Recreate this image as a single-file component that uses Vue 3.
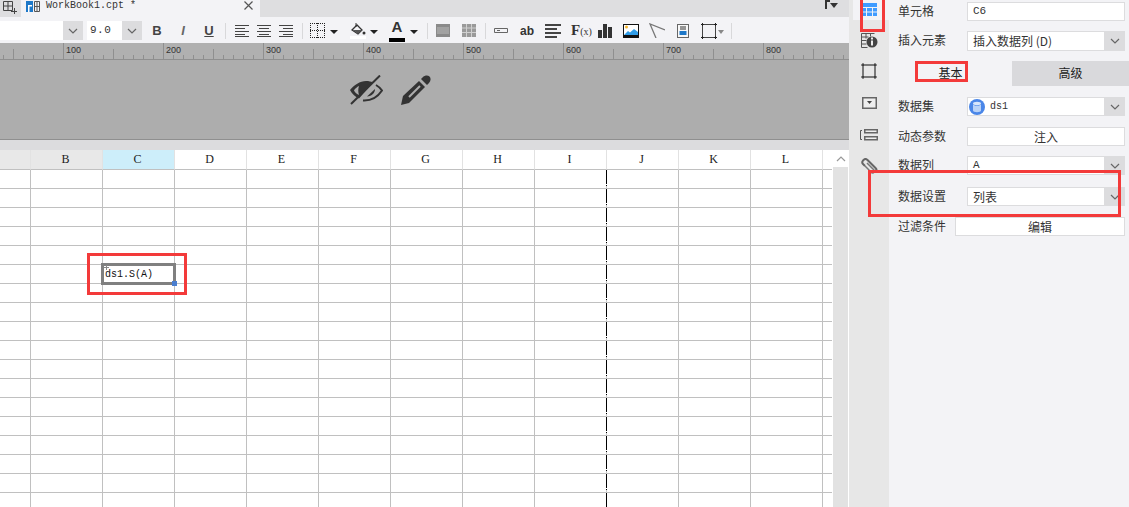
<template>
  <div class="app">
    <div class="main">
      <!-- 标签栏 -->
      <div class="tabbar">
        <svg class="tab-add" width="14" height="14" viewBox="0 0 14 14"><path d="M0.5 1.500h9v9h-9zM5 1.500v9M0.500 6h9" fill="none" stroke="#444" /><path d="M11.500 8v6M8 11.500h6" stroke="#444" /></svg>
        <div class="tab">
          <svg class="tab-icon" width="14" height="13" viewBox="0 0 14 13"><rect x="0" y="1" width="7" height="11" fill="#1e78c8" /><path d="M2 5h4v1.500H3.500V12H2z" fill="#fff" /><path d="M8.500 1.500h5v10h-5zM8.500 6.500h5M11 1.500v10" fill="none" stroke="#555" /></svg>
          <span class="tab-name">WorkBook1.cpt *</span>
          <svg class="tab-close" width="9" height="9" viewBox="0 0 9 9"><path d="M0.500 0.500l8 8M8.500 0.500l-8 8" stroke="#555" stroke-width="1.200" /></svg>
        </div>
        <svg class="painter" width="14" height="9" viewBox="0 0 14 9"><path d="M0 0h5v2H2v7H0z" fill="#333" /><path d="M5 3h8l-4 5z" fill="#333" /></svg>
      </div>

      <!-- 工具栏 -->
      <div class="toolbar">
        <div class="combo combo-font">
          <div class="combo-value"></div>
          <div class="combo-btn"><svg width="10" height="6" viewBox="0 0 10 6"><path d="M1 1l4 4 4-4" fill="none" stroke="#666" stroke-width="1.200" /></svg></div>
        </div>
        <div class="combo combo-size">
          <div class="combo-value">9.0</div>
          <div class="combo-btn"><svg width="10" height="6" viewBox="0 0 10 6"><path d="M1 1l4 4 4-4" fill="none" stroke="#666" stroke-width="1.200" /></svg></div>
        </div>
        <span class="tool t-text bold">B</span>
        <span class="tool t-text italic">I</span>
        <span class="tool t-text under">U</span>
        <i class="sep s1"></i>
        <svg class="tool-a a1" width="14" height="12" viewBox="0 0 14 12"><path d="M0 .5h14M0 3.500h10M0 6.500h14M0 9.500h10M0 11.500h14" stroke="#444" /></svg>
        <svg class="tool-a" width="14" height="12" viewBox="0 0 14 12"><path d="M0 .5h14M2 3.500h10M0 6.500h14M2 9.500h10M0 11.500h14" stroke="#444" /></svg>
        <svg class="tool-a" width="14" height="12" viewBox="0 0 14 12"><path d="M0 .5h14M4 3.500h10M0 6.500h14M4 9.500h10M0 11.500h14" stroke="#444" /></svg>
        <i class="sep s2"></i>
        <svg class="ic" style="margin-left:7px" width="15" height="15" viewBox="0 0 15 15"><path d="M0 .5h15M0 14.500h15M.5 0v15M14.500 0v15M7.500 0v15M0 7.500h15" fill="none" stroke="#222" stroke-dasharray="1 1" /></svg>
        <i class="caret" style="margin-left:5px"></i>
        <svg class="ic" style="margin-left:12px" width="16" height="16" viewBox="0 0 16 16"><path d="M2 7l5-5 5 5-4 4z" fill="none" stroke="#333" stroke-width="1.300" /><path d="M3 7h9l-4 4z" fill="#555" /><path d="M6 4V0" stroke="#333" /><circle cx="14" cy="10" r="1.500" fill="#333" /><rect y="13" width="16" height="3" fill="#fff" /></svg>
        <i class="caret" style="margin-left:4px"></i>
        <div class="color-a" style="margin-left:11px">A</div>
        <i class="caret" style="margin-left:5px"></i>
        <i class="sep" style="margin-left:9px"></i>
        <svg class="ic" style="margin-left:8px" width="14" height="13" viewBox="0 0 14 13"><rect width="14" height="13" fill="#8a8a8a" /><rect x="1" y="3" width="12" height="7" fill="#a2a2a2" /></svg>
        <svg class="ic" style="margin-left:12px" width="14" height="13" viewBox="0 0 14 13"><rect width="14" height="13" fill="#9a9a9a" /><path d="M0 4h14M0 8.500h14M4.500 0v13M9.500 0v13" stroke="#d0d0d0" /></svg>
        <i class="sep" style="margin-left:9px"></i>
        <svg class="ic" style="margin-left:8px" width="14" height="5" viewBox="0 0 14 5"><path d="M.5.500h13v4H.5z" fill="none" stroke="#666" /><path d="M3 2.500h3" stroke="#666" /></svg>
        <span class="ab">ab</span>
        <svg class="ic" style="margin-left:11px" width="16" height="14" viewBox="0 0 16 14"><path d="M0 1h16M0 5h12M0 9h16M0 13h12" stroke="#444" stroke-width="2" /></svg>
        <span class="fx">F<small>(x)</small></span>
        <svg class="ic" style="margin-left:11px" width="14" height="14" viewBox="0 0 14 14"><path d="M0 6h4v8H0zM5 0h4v14H5zM10 3h4v11h-4z" fill="#333" /></svg>
        <svg class="ic" style="margin-left:11px" width="16" height="14" viewBox="0 0 16 14"><rect width="16" height="14" fill="#111" /><rect x="1" y="1" width="14" height="10" fill="#fff" /><circle cx="3.500" cy="3" r="1.500" fill="#f5b52e" /><path d="M1 11l4-4 2 1.500L11 5l4 3v3z" fill="#2f9ce8" /></svg>
        <svg class="ic" style="margin-left:10px" width="16" height="15" viewBox="0 0 16 15"><path d="M16 7L1 1l6 14" fill="none" stroke="#777" stroke-width="1.300" /></svg>
        <svg class="ic" style="margin-left:12px" width="12" height="14" viewBox="0 0 12 14"><rect x=".5" y=".5" width="11" height="13" fill="#f8f8f8" stroke="#666" /><path d="M3 3h6M3 5h6" stroke="#333" /><rect x="2.500" y="7" width="7" height="4" fill="#1e78c8" /></svg>
        <svg class="ic" style="margin-left:12px" width="16" height="16" viewBox="0 0 16 16"><path d="M1.500 1.500h13v13h-13z" fill="none" stroke="#444" /><path d="M0 1.500h3M1.500 0v3M13 1.500h3M14.500 0v3M0 14.500h3M1.500 13v3M13 14.500h3M14.500 13v3" stroke="#222" /></svg>
        <i class="caret gray" style="margin-left:1px"></i>
        <i class="sep" style="margin-left:7px"></i>
      </div>

      <!-- 标尺 -->
      <svg class="ruler" width="849" height="17" viewBox="0 0 849 17">
        <rect width="849" height="17" fill="#b0b0b0" />
        <path :d="rulerTicks" stroke="#8f8f8f" fill="none" />
        <rect y="16" width="849" height="1.500" fill="#8f8f8f" />
        <text v-for="n in rulerLabels" :key="n" :x="n - 37 + 3" y="10" class="ruler-label">{{ n }}</text>
      </svg>

      <!-- 灰色预览区 -->
      <div class="preview">
        <svg width="33" height="30" viewBox="0 0 33 30">
          <path d="M0 15C4 10 10 6 16 6c3 0 5 .5 7 1.500L9 23.500C5 21.500 2 19 0 15zm4 .5c1 2 3 3.500 5 4.500-1-3-1-6 0-9-2 1-4 2.500-5 4.500z" fill="#333" fill-rule="evenodd" />
          <path d="M26 10c2.500 1.500 4.500 3 6 5.500-4 6-10 10.500-19 10" fill="none" stroke="#333" stroke-width="2" />
          <path d="M25 14c0 4-3 7-8 7.500z" fill="#333" />
          <path d="M30 0.500L1 29" stroke="#333" stroke-width="2" />
        </svg>
        <svg class="pencil" width="30" height="30" viewBox="0 0 30 30">
          <path d="M22 2c2-2 5-2 6.500-.5S30 6 28 8l-2 2-6-6z" fill="#333" />
          <path d="M18 6l6 6L8 28l-8 2 2-9z" fill="#333" />
          <path d="M19 11L8 22" stroke="#adadad" stroke-width="2" />
        </svg>
      </div>
      <div class="strip"></div>

      <!-- 表格 -->
      <div class="sheet">
        <div class="sheet-body">
          <div class="col-header">
            <div class="head-cell narrow"></div>
            <div v-for="c in columns" :key="c" class="head-cell" :class="{ picked: c === 'C', dim: c === 'B' }">{{ c }}</div>
            <div class="head-cell tail"></div>
          </div>
          <div v-for="r in 18" :key="r" class="row">
            <div class="cell narrow"></div>
            <div v-for="c in columns" :key="c" class="cell"></div>
            <div class="cell tail"></div>
          </div>
          <div class="page-break"></div>
          <div class="selected">
            <span class="sel-text">ds1.S(A)</span>
            <svg class="plus" width="5" height="5" viewBox="0 0 5 5"><path d="M2.500 0v5M0 2.500h5" stroke="#888" /></svg>
            <i class="handle"></i>
          </div>
          <div class="mark mark-cell"></div>
        </div>
        <div class="scrollbar">
          <div class="scroll-up"><svg width="10" height="6" viewBox="0 0 10 6"><path d="M1 5l4-4 4 4" fill="none" stroke="#999" stroke-width="1.200" /></svg></div>
          <div class="scroll-track"></div>
        </div>
      </div>
    </div>

    <!-- 右侧图标栏 -->
    <div class="sidebar">
      <div class="side-item active">
        <svg width="15" height="13" viewBox="0 0 15 13"><path d="M0 0h15v4H0zM0 5h4v3.500H0zM5 5h5v3.500H5zM11 5h4v3.500h-4zM0 9.500h4V13H0zM5 9.500h5V13H5zM11 9.500h4V13h-4z" fill="#3f9bff" /></svg>
      </div>
      <div class="side-item i2">
        <svg width="17" height="15" viewBox="0 0 17 15"><path d="M.5.500h13M.5 4h7M.5 7.500h5M.5 11h5M.5.500v14h6M5 .5v5M9.500.5v3" fill="none" stroke="#555" /><circle cx="11" cy="9" r="5.500" fill="#444" /><rect x="10" y="7.500" width="2" height="5" fill="#eee" /><rect x="10" y="4.500" width="2" height="2" fill="#eee" /></svg>
      </div>
      <div class="side-item i3">
        <svg width="16" height="16" viewBox="0 0 16 16"><path d="M2 2h12v12H2z" fill="none" stroke="#555" stroke-width="1.500" /><path d="M0 2h3M2 0v3M13 2h3M14 0v3M0 14h3M2 13v3M13 14h3M14 13v3" stroke="#333" /></svg>
      </div>
      <div class="side-item i4">
        <svg width="15" height="12" viewBox="0 0 15 12"><rect x=".75" y=".75" width="13.500" height="10.500" fill="#eee" stroke="#666" stroke-width="1.500" /><path d="M5 4h5L7.500 7z" fill="#444" /></svg>
      </div>
      <div class="side-item i5">
        <svg width="18" height="12" viewBox="0 0 18 12"><path d="M2 1.500H0.500v9H2" fill="none" stroke="#555" /><rect x="4" y="0" width="14" height="4.500" fill="#666" /><rect x="5.500" y="1.500" width="11" height="1.500" fill="#eee" /><rect x="4" y="7" width="14" height="4.500" fill="#666" /><rect x="5.500" y="8.500" width="11" height="1.500" fill="#eee" /></svg>
      </div>
      <div class="side-item i6">
        <svg width="17" height="17" viewBox="0 0 17 17"><path d="M4 8L2 6c-1.500-1.500-.5-3 .5-4s2.500-1.500 4 0l8 8c1.500 1.500 1 3 0 4" fill="none" stroke="#666" stroke-width="2" /><path d="M6 5l7 7c1 1 0 3-1.500 3S9 13 8 12L4 8" fill="none" stroke="#777" stroke-width="1.500" /></svg>
      </div>
    </div>

    <!-- 属性面板 -->
    <div class="panel">
      <div class="field f1">
        <span class="label">单元格</span>
        <div class="input">C6</div>
      </div>
      <div class="field f2">
        <span class="label">插入元素</span>
        <div class="input cjk">插入数据列 (D)</div>
        <div class="drop"><svg width="10" height="6" viewBox="0 0 10 6"><path d="M1 1l4 4 4-4" fill="none" stroke="#666" stroke-width="1.200" /></svg></div>
      </div>
      <div class="tabs">
        <div class="tab-item on">基本</div>
        <div class="tab-item">高级</div>
      </div>
      <div class="field f3">
        <span class="label">数据集</span>
        <div class="input ds">
          <svg width="16" height="16" viewBox="0 0 16 16"><circle cx="8" cy="8" r="8" fill="#4a86e8" /><ellipse cx="8" cy="4.500" rx="4" ry="1.700" fill="#d8e6fb" /><path d="M4 5.500v6c0 1 2 1.700 4 1.700s4-.7 4-1.700v-6c-1 1-2.500 1.300-4 1.300s-3-.3-4-1.300z" fill="#b9d2f7" /></svg>
          <span>ds1</span>
        </div>
        <div class="drop"><svg width="10" height="6" viewBox="0 0 10 6"><path d="M1 1l4 4 4-4" fill="none" stroke="#666" stroke-width="1.200" /></svg></div>
      </div>
      <div class="field f4">
        <span class="label">动态参数</span>
        <div class="input center">注入</div>
      </div>
      <div class="field f5">
        <span class="label">数据列</span>
        <div class="input mono">A</div>
        <div class="drop"><svg width="10" height="6" viewBox="0 0 10 6"><path d="M1 1l4 4 4-4" fill="none" stroke="#666" stroke-width="1.200" /></svg></div>
      </div>
      <div class="field f6">
        <span class="label">数据设置</span>
        <div class="input cjk">列表</div>
        <div class="drop"><svg width="10" height="6" viewBox="0 0 10 6"><path d="M1 1l4 4 4-4" fill="none" stroke="#666" stroke-width="1.200" /></svg></div>
      </div>
      <div class="field f7">
        <span class="label short">过滤条件</span>
        <div class="input center">编辑</div>
      </div>
    </div>

    <!-- 红色标注框 -->
    <div class="mark mark-icon"></div>
    <div class="mark mark-tab"></div>
    <div class="mark mark-setting"></div>
  </div>
</template>

<script setup>
import { computed } from 'vue'

const columns = ['B', 'C', 'D', 'E', 'F', 'G', 'H', 'I', 'J', 'K', 'L']
const rulerLabels = [100, 200, 300, 400, 500, 600, 700, 800]

// 每10格一个小刻度，50格中刻度，100格到顶
const rulerTicks = computed(() => {
  let d = ''
  for (let v = 40; v <= 880; v += 10) {
    const x = v - 37 + 0.5
    let top = 12
    if (v % 100 === 0) top = 0
    else if (v % 50 === 0) top = 6
    d += `M${x} ${top}V16`
  }
  return d
})
</script>

<style scoped>
.app {
  position: relative;
  display: flex;
  width: 1129px;
  height: 507px;
  overflow: hidden;
  font-family: "Noto Sans CJK SC", "Liberation Sans", sans-serif;
  font-size: 12px;
  color: #222;
}

.main {
  display: flex;
  flex-direction: column;
  width: 849px;
  flex-shrink: 0;
}

.tabbar {
  display: flex;
  align-items: center;
  height: 17px;
  background: #dedee0;
  flex-shrink: 0;
}

.tab-add {
  margin-left: 3px;
  margin-top: -4px;
}

.tab {
  display: flex;
  align-items: center;
  width: 239px;
  height: 17px;
  margin-left: 4px;
  background: #f3f3f6;
}

.tab-icon {
  margin-left: 5px;
  margin-top: -4px;
}

.tab-name {
  margin-left: 6px;
  margin-top: -6px;
  font-family: "Liberation Mono", monospace;
  font-size: 10px;
  color: #333;
}

.tab-close {
  margin-left: auto;
  margin-right: 7px;
  margin-top: -6px;
}

.painter {
  margin-left: auto;
  margin-right: 10px;
  margin-top: -9px;
}

.toolbar {
  display: flex;
  align-items: center;
  height: 26px;
  padding-top: 1px;
  box-sizing: border-box;
  background: #f3f3f6;
  flex-shrink: 0;
}

.combo {
  display: flex;
  height: 19px;
}

.combo-font {
  width: 83px;
}

.combo-size {
  width: 55px;
  margin-left: 4px;
}

.combo-value {
  flex: 1;
  padding-left: 3px;
  background: #fff;
  font-family: "Liberation Mono", monospace;
  font-size: 11px;
  line-height: 19px;
  color: #333;
  letter-spacing: 0.5px;
}

.combo-btn,
.drop {
  display: flex;
  align-items: center;
  justify-content: center;
  width: 20px;
  background: #dcdcde;
}

.tool {
  width: 26px;
  text-align: center;
}

.t-text {
  font-family: "Liberation Sans", sans-serif;
  font-size: 13px;
  color: #444;
}

.bold {
  margin-left: 2px;
  font-weight: 700;
}

.italic {
  font-style: italic;
  font-weight: 700;
  color: #666;
}

.under {
  font-weight: 700;
  text-decoration: underline;
}

.sep {
  display: block;
  width: 1px;
  height: 16px;
  background: #d8d8da;
}

.s1 {
  margin-left: 3px;
}

.s2 {
  margin-left: 9px;
}

.tool-a {
  margin-left: 8px;
}

.a1 {
  margin-left: 9px;
}

.ic {
  flex-shrink: 0;
}

.caret {
  display: block;
  width: 0;
  height: 0;
  border-left: 4px solid transparent;
  border-right: 4px solid transparent;
  border-top: 4px solid #222;
  margin-top: 2px;
}

.caret.gray {
  border-left-width: 3px;
  border-right-width: 3px;
  border-top-color: #888;
}

.color-a {
  width: 16px;
  height: 18px;
  border-bottom: 4px solid #000;
  font-family: "Liberation Sans", sans-serif;
  font-size: 15px;
  font-weight: 700;
  line-height: 14px;
  text-align: center;
  color: #333;
}

.ab {
  margin-left: 12px;
  width: 14px;
  font-family: "Liberation Sans", sans-serif;
  font-size: 12px;
  font-weight: 700;
  color: #333;
}

.fx {
  margin-left: 10px;
  width: 16px;
  font-family: "Liberation Serif", serif;
  font-size: 15px;
  font-weight: 700;
  color: #333;
  white-space: nowrap;
}

.fx small {
  font-size: 10px;
  font-weight: 400;
}

.ruler {
  display: block;
  flex-shrink: 0;
}

.ruler-label {
  font-family: "Liberation Sans", sans-serif;
  font-size: 9px;
  fill: #333;
}

.preview {
  display: flex;
  align-items: flex-start;
  height: 80px;
  padding-left: 350px;
  padding-top: 15px;
  box-sizing: border-box;
  background: #adadad;
  border-bottom: 1px solid #8f8f8f;
  flex-shrink: 0;
}

.pencil {
  margin-left: 18px;
}

.strip {
  height: 10px;
  background: #dcdcde;
  flex-shrink: 0;
}

.sheet {
  display: flex;
  flex: 1;
  min-height: 0;
}

.sheet-body {
  position: relative;
  width: 832px;
  overflow: hidden;
  background: #fff;
}

.col-header,
.row {
  display: flex;
  height: 19px;
  box-sizing: border-box;
}

.col-header {
  height: 20px;
}

.head-cell,
.cell {
  width: 72px;
  flex-shrink: 0;
  box-sizing: border-box;
  border-right: 1px solid #c0c0c0;
  border-bottom: 1px solid #c0c0c0;
}

.head-cell {
  padding-right: 2px;
  font-family: "Liberation Serif", serif;
  font-size: 12px;
  line-height: 19px;
  text-align: center;
  color: #222;
  background: #fff;
  border-right-color: #e2e2e2;
  border-bottom-color: #c0c0c0;
}

.head-cell.picked {
  background: #cdeefa;
}

.head-cell.dim,
.head-cell.narrow {
  background: #e8e8e8;
}

.narrow {
  width: 31px;
}

.tail {
  width: 10px;
  border-right: none;
}

.page-break {
  position: absolute;
  left: 606px;
  top: 20px;
  bottom: 0;
  width: 1px;
  background: repeating-linear-gradient(to bottom, #000 0 14px, #fff 14px 15px, #000 15px 16px, #c8c8c8 16px 19px);
}

.selected {
  position: absolute;
  left: 101px;
  top: 113px;
  width: 75px;
  height: 22px;
  box-sizing: border-box;
  border: 3px solid #808080;
}

.sel-text {
  position: absolute;
  left: 1px;
  top: 3px;
  font-family: "Liberation Mono", monospace;
  font-size: 10px;
  line-height: 12px;
  color: #111;
  white-space: nowrap;
}

.plus {
  position: absolute;
  left: 0;
  top: -1px;
}

.handle {
  position: absolute;
  right: -4px;
  bottom: -4px;
  width: 5px;
  height: 5px;
  background: #4a7fd0;
}

.scrollbar {
  display: flex;
  flex-direction: column;
  width: 17px;
  background: #fff;
}

.scroll-up {
  display: flex;
  align-items: center;
  justify-content: center;
  height: 17px;
  flex-shrink: 0;
}

.scroll-track {
  flex: 1;
  margin: 0 1px;
  background: #e2e2e2;
}

.sidebar {
  display: flex;
  flex-direction: column;
  align-items: center;
  width: 40px;
  background: #e7e7e7;
  flex-shrink: 0;
}

.side-item {
  display: flex;
  align-items: center;
  justify-content: center;
  width: 100%;
  height: 18px;
}

.side-item.active {
  align-items: flex-start;
  height: 20px;
  padding-top: 3px;
  box-sizing: border-box;
  width: 36px;
  margin-left: 4px;
  padding-right: 4px;
  background: #f3f3f6;
}

.i2 {
  margin-top: 11px;
}

.i3 {
  margin-top: 13px;
}

.i4 {
  margin-top: 14px;
}

.i5 {
  margin-top: 14px;
}

.i6 {
  margin-top: 13px;
}

.panel {
  flex: 1;
  background: #f3f3f6;
}

.field {
  display: flex;
  height: 19px;
  padding-left: 9px;
  padding-right: 4px;
}

.f1 {
  margin-top: 2px;
}

.f2 {
  height: 20px;
  margin-top: 10px;
}

.f3 {
  margin-top: 11px;
}

.f4 {
  margin-top: 11px;
}

.f5 {
  margin-top: 10px;
}

.f6 {
  margin-top: 12px;
}

.f7 {
  margin-top: 11px;
}

.label {
  width: 69px;
  font-size: 12px;
  line-height: 18px;
  color: #333;
  flex-shrink: 0;
}

.label.short {
  width: 57px;
}

.input {
  flex: 1;
  min-width: 0;
  padding-left: 5px;
  box-sizing: border-box;
  background: #fff;
  border: 1px solid #dcdcde;
  font-family: "Liberation Mono", monospace;
  font-size: 11px;
  line-height: 17px;
  color: #333;
}

.input.cjk,
.input.center {
  font-family: "Noto Sans CJK SC", sans-serif;
  font-size: 12px;
}

.input.center {
  padding-left: 0;
  text-align: center;
}

.input.ds {
  display: flex;
  align-items: center;
  gap: 5px;
  padding-left: 1px;
  font-size: 10px;
}

.tabs {
  display: flex;
  height: 25px;
  margin-top: 10px;
}

.tab-item {
  font-size: 12px;
  line-height: 24px;
  text-align: center;
  flex: 1;
  background: #d9d9dc;
  color: #222;
}

.tab-item.on {
  flex: 0 0 123px;
  background: #f3f3f6;
}

.mark {
  position: absolute;
  box-sizing: border-box;
  border: 3px solid #f33a3a;
  pointer-events: none;
}

.mark-cell {
  left: 87px;
  top: 103px;
  width: 100px;
  height: 42px;
}

.mark-icon {
  left: 860px;
  top: -5px;
  width: 25px;
  height: 37px;
}

.mark-tab {
  left: 915px;
  top: 61px;
  width: 53px;
  height: 21px;
}

.mark-setting {
  left: 868px;
  top: 170px;
  width: 253px;
  height: 47px;
}
</style>
